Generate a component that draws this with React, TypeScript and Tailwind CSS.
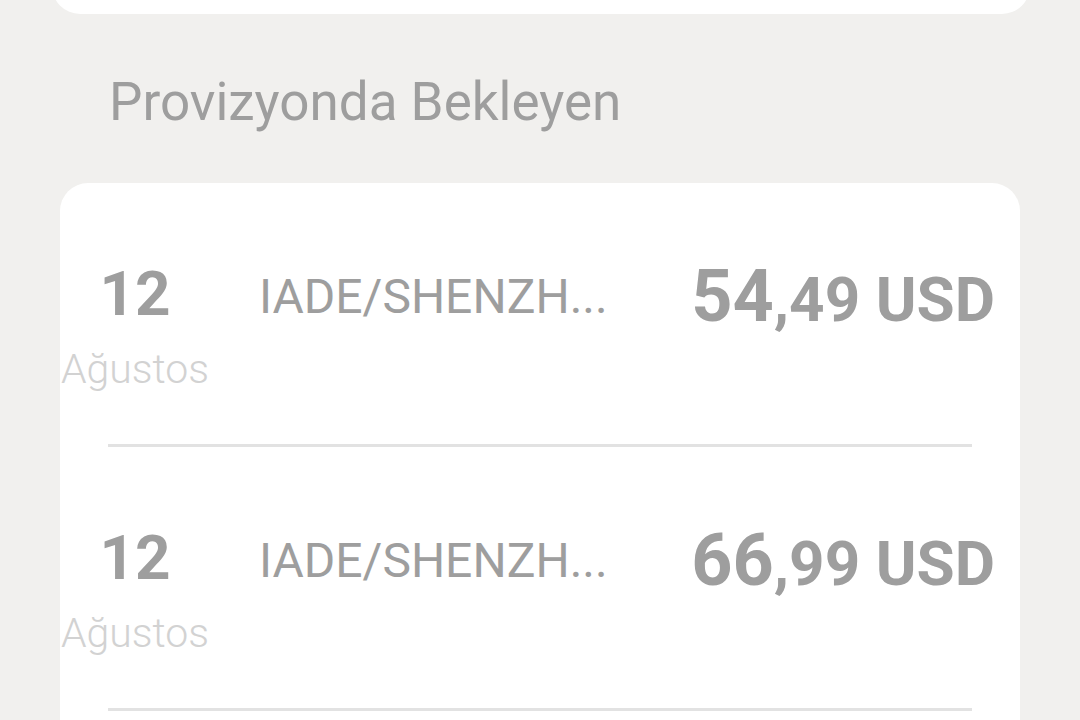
import React from "react";

const rows = [
  { day: "12", month: "Ağustos", desc: "IADE/SHENZH...", whole: "54", rest: ",49 USD" },
  { day: "12", month: "Ağustos", desc: "IADE/SHENZH...", whole: "66", rest: ",99 USD" },
];

export default function App() {
  return (
    <div
      className="h-[720px] w-[1080px] overflow-hidden bg-[#f1f0ee]"
      style={{ fontFamily: "Roboto, 'Noto Sans', sans-serif" }}
    >
      {/* previous card, cut off at the top */}
      <div className="mx-[52px] -mt-[46px] h-[60px] w-[978px] rounded-b-[28px] bg-white" />

      <h2 className="ml-[109px] mt-[58px] text-[53px] leading-[60px] text-[#9e9e9e]">
        Provizyonda Bekleyen
      </h2>

      {/* pending list */}
      <div className="ml-[60px] mt-[51px] w-[960px] rounded-[28px] bg-white pb-[60px]">
        {rows.map((row, i) => (
          <div key={i} className="flex flex-col">
            <div className="flex h-[261px] items-start pt-[80px]">
              <div className="flex w-[150px] flex-col items-center">
                <span className="text-[62px] font-bold leading-[62px] text-[#9e9e9e]">{row.day}</span>
                <span className="mt-[24px] text-[41px] font-light leading-[41px] text-[#d2d2d2]">{row.month}</span>
              </div>
              <div className="ml-[49px] mt-[10px] flex-1 text-[48px] leading-[48px] text-[#9e9e9e]">{row.desc}</div>
              <div className="mr-[25px] -mt-[2px] font-bold leading-[72px] text-[#9e9e9e]">
                <span className="text-[72px]">{row.whole}</span>
                <span className="text-[62px]">{row.rest}</span>
              </div>
            </div>
            <div className="mx-[48px] h-[3px] bg-[#e2e2e2]" />
          </div>
        ))}
      </div>
    </div>
  );
}
